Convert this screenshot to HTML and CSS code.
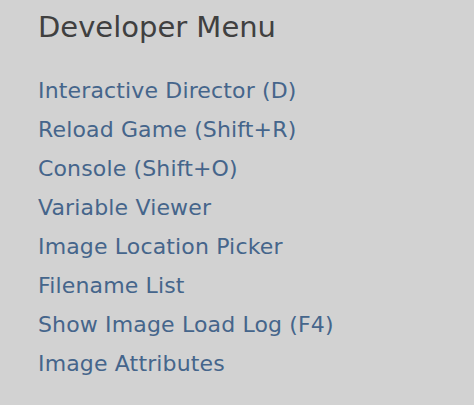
FILE: index.html
```html
<!DOCTYPE html>
<html>
<head>
<meta charset="utf-8">
<link rel="stylesheet" href="styles.css">
</head>
<body>
<div class="menu">
  <h1 class="title">Developer Menu</h1>
  <ul class="items">
    <li><a class="item">Interactive Director (D)</a></li>
    <li><a class="item">Reload Game (Shift+R)</a></li>
    <li><a class="item">Console (Shift+O)</a></li>
    <li><a class="item">Variable Viewer</a></li>
    <li><a class="item">Image Location Picker</a></li>
    <li><a class="item">Filename List</a></li>
    <li><a class="item">Show Image Load Log (F4)</a></li>
    <li><a class="item">Image Attributes</a></li>
  </ul>
</div>
</body>
</html>
```
FILE: styles.css
```css
html, body {
  margin: 0;
  padding: 0;
  background: #d2d2d2;
  font-family: "DejaVu Sans", sans-serif;
}
.menu {
  padding: 10px 0 0 38px;
}
.title {
  margin: 0;
  font-size: 29px;
  font-weight: normal;
  line-height: 34px;
  color: #404040;
}
.items {
  list-style: none;
  margin: 27px 0 0 0;
  padding: 0;
}
.items li {
  height: 39px;
  line-height: 39px;
}
.item {
  font-size: 22px;
  letter-spacing: 0.15px;
  color: #45658b;
  text-decoration: none;
}
```
